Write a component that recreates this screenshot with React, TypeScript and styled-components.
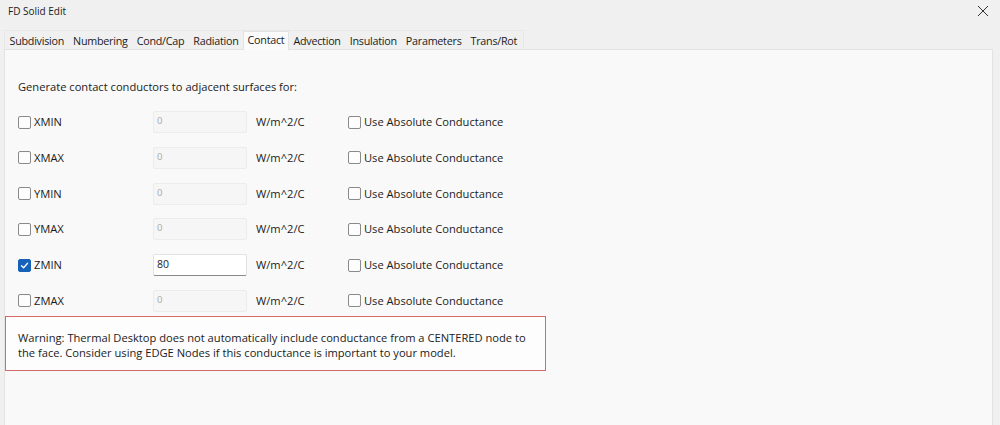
import React from 'react';
import styled, { createGlobalStyle } from 'styled-components';

const GlobalStyle = createGlobalStyle`
  html, body {
    margin: 0;
    padding: 0;
    background: #f0f0f0;
    font-family: "Open Sans", "Noto Sans", sans-serif;
    font-size: 11.15px;
    color: #1b1b1b;
  }
`;

type Side = { name: string; value: string; enabled: boolean };

const sides: Side[] = [
  { name: 'XMIN', value: '0', enabled: false },
  { name: 'XMAX', value: '0', enabled: false },
  { name: 'YMIN', value: '0', enabled: false },
  { name: 'YMAX', value: '0', enabled: false },
  { name: 'ZMIN', value: '80', enabled: true },
  { name: 'ZMAX', value: '0', enabled: false },
];

const tabs = [
  'Subdivision',
  'Numbering',
  'Cond/Cap',
  'Radiation',
  'Contact',
  'Advection',
  'Insulation',
  'Parameters',
  'Trans/Rot',
];

const App: React.FC = () => {
  return (
    <Window>
      <GlobalStyle />
      <TitleBar>
        <Title>FD Solid Edit</Title>
        <CloseButton>{closeIcon}</CloseButton>
      </TitleBar>
      <TabStrip>
        {tabs.map((t) => (
          <Tab key={t} active={t === 'Contact'}>
            {t}
          </Tab>
        ))}
      </TabStrip>
      <Panel>
        <Heading>Generate contact conductors to adjacent surfaces for:</Heading>
        <Rows>
          {sides.map((s) => (
            <Row key={s.name}>
              <CheckLabel>
                <Box checked={s.enabled}>{s.enabled && checkMark}</Box>
                {s.name}
              </CheckLabel>
              <Field enabled={s.enabled}>{s.value}</Field>
              <Unit>W/m^2/C</Unit>
              <CheckLabel>
                <Box checked={false} />
                Use Absolute Conductance
              </CheckLabel>
            </Row>
          ))}
        </Rows>
        <Warning>
          Warning: Thermal Desktop does not automatically include conductance
          from a CENTERED node to
          <br />
          the face. Consider using EDGE Nodes if this conductance is important
          to your model.
        </Warning>
      </Panel>
    </Window>
  );
};

export default App;

const Window = styled.div`
  width: 1000px;
  height: 425px;
  overflow: hidden;
  background: #f0f0f0;
  display: flex;
  flex-direction: column;
`;

const TitleBar = styled.div`
  height: 22px;
  display: flex;
  align-items: center;
  justify-content: space-between;
  padding: 0 8px 0 8px;
`;

const Title = styled.div`
  font-size: 10px;
  color: #1b1b1b;
`;

const CloseButton = styled.div`
  width: 14px;
  height: 14px;
  display: flex;
  align-items: center;
  justify-content: center;
  margin-right: 2px;
`;

const TabStrip = styled.div`
  display: flex;
  align-items: flex-end;
  align-self: flex-start;
  margin: 8px 0 0 4px;
  height: 19px;
  box-sizing: border-box;
  border: 1px solid #e8e8e8;
  border-bottom: none;
  padding-right: 1px;
`;

const Tab = styled.div<{ active: boolean }>`
  height: ${({ active }) => (active ? '19px' : '17px')};
  line-height: ${({ active }) => (active ? '16px' : '17px')};
  margin-top: ${({ active }) => (active ? '-1px' : '0')};
  padding: 0 3.5px;
  background: ${({ active }) => (active ? '#fbfbfb' : 'transparent')};
  border-left: 1px solid ${({ active }) => (active ? '#e3e3e3' : 'transparent')};
  border-right: 1px solid ${({ active }) => (active ? '#e3e3e3' : 'transparent')};
  border-top: 1px solid ${({ active }) => (active ? '#e3e3e3' : 'transparent')};
  font-size: 10.75px;
  letter-spacing: -0.25px;
  color: #1b1b1b;
  white-space: nowrap;
  position: relative;
  z-index: ${({ active }) => (active ? 1 : 0)};
  box-sizing: border-box;
  margin-bottom: ${({ active }) => (active ? '-1px' : '0')};
`;

const Panel = styled.div`
  flex: 1;
  margin: 0 7px 0 4px;
  background: #f9f9f9;
  border: 1px solid #e3e3e3;
  border-bottom: none;
  padding: 29px 0 0 13px;
  display: flex;
  flex-direction: column;
  align-items: flex-start;
`;

const Heading = styled.div`
  line-height: 16px;
  height: 16px;
`;

const Rows = styled.div`
  display: flex;
  flex-direction: column;
  gap: 13.8px;
  margin-top: 16px;
`;

const Row = styled.div`
  display: grid;
  grid-template-columns: 135px 103px 92px auto;
  align-items: center;
  height: 22px;
`;

const CheckLabel = styled.label`
  display: flex;
  align-items: center;
  gap: 3px;
  line-height: 16px;
`;

const Box = styled.span<{ checked: boolean }>`
  width: 11px;
  height: 11px;
  border-radius: 2px;
  border: 1px solid ${({ checked }) => (checked ? '#1562b8' : '#8a8a8a')};
  background: ${({ checked }) => (checked ? '#1562b8' : '#fdfdfd')};
  display: flex;
  align-items: center;
  justify-content: center;
`;

const Field = styled.div<{ enabled: boolean }>`
  width: 94px;
  height: 22px;
  box-sizing: border-box;
  padding: 2px 0 0 3px;
  font-size: ${({ enabled }) => (enabled ? '10.5px' : '9.5px')};
  line-height: 14px;
  background: ${({ enabled }) => (enabled ? '#ffffff' : '#f6f6f6')};
  color: ${({ enabled }) => (enabled ? '#1b1b1b' : '#a8a8a8')};
  border: 1px solid ${({ enabled }) => (enabled ? '#e2e2e2' : '#ececec')};
  border-bottom: 1px solid ${({ enabled }) => (enabled ? '#8a8a8a' : '#ececec')};
  border-radius: 2px;
`;

const Unit = styled.div`
  line-height: 16px;
`;

const Warning = styled.div`
  margin: 4px 0 0 -13px;
  width: 541px;
  height: 55px;
  box-sizing: border-box;
  border: 1px solid #d46a6a;
  padding: 13px 0 0 12px;
  line-height: 15px;
  background: #fdfdfd;
`;

const closeIcon = (
  <svg width="12" height="12" viewBox="0 0 12 12" fill="none">
    <path d="M1 1L11 11M11 1L1 11" stroke="#333" strokeWidth="1" />
  </svg>
);

const checkMark = (
  <svg width="9" height="9" viewBox="0 0 9 9" fill="none">
    <path
      d="M1.5 4.8L3.6 6.8L7.6 2.2"
      stroke="#ffffff"
      strokeWidth="1.3"
      strokeLinecap="round"
      strokeLinejoin="round"
    />
  </svg>
);
